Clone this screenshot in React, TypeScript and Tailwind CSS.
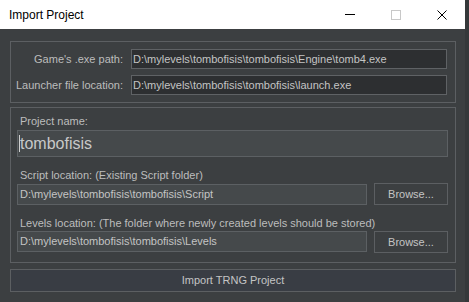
import React from "react";

const font = { fontFamily: '"Liberation Sans", Arial, sans-serif' };

export default function App() {
  return (
    <div className="w-[469px] h-[302px] bg-[#35383a] flex overflow-hidden" style={font}>
      <div className="w-[465px] h-[302px] flex flex-col">
        {/* Title bar */}
        <div className="h-[29px] bg-white flex items-center shrink-0">
          <span className="pl-[9px] text-[12px] text-black flex-1">Import Project</span>
          <div className="flex items-center h-full">
            <div className="w-[46px] h-full flex items-center justify-center">
              <div className="w-[10px] h-px bg-black" />
            </div>
            <div className="w-[46px] h-full flex items-center justify-center">
              <div className="w-[10px] h-[10px] border border-[#c8c8c8]" />
            </div>
            <div className="w-[46px] h-full flex items-center justify-center">
              <svg width="10" height="10" viewBox="0 0 10 10">
                <path d="M0.5 0.5 L9.5 9.5 M9.5 0.5 L0.5 9.5" stroke="#000" strokeWidth="1" />
              </svg>
            </div>
          </div>
        </div>

        {/* Body */}
        <div className="flex-1 bg-[#3c3f41] pl-[10px] pr-[9px] pt-[12px] flex flex-col text-[#bdbdbd] text-[11px]">
          {/* Group 1 */}
          <div className="border border-[#5c5f62] pt-[7px] pb-[7px] pr-[8px] flex flex-col gap-[6px]">
            <div className="flex items-center">
              <div className="w-[112px] text-right whitespace-nowrap">Game's .exe path:</div>
              <div className="ml-[8px] flex-1 h-[20px] bg-[#2d2f31] border border-[#5f6265] flex items-center pl-[1px] whitespace-nowrap overflow-hidden text-[#c4c4c4]">
                D:\mylevels\tombofisis\tombofisis\Engine\tomb4.exe
              </div>
            </div>
            <div className="flex items-center">
              <div className="w-[112px] text-right whitespace-nowrap">Launcher file location:</div>
              <div className="ml-[8px] flex-1 h-[20px] bg-[#2d2f31] border border-[#5f6265] flex items-center pl-[1px] whitespace-nowrap overflow-hidden text-[#c4c4c4]">
                D:\mylevels\tombofisis\tombofisis\launch.exe
              </div>
            </div>
          </div>

          {/* Group 2 */}
          <div className="mt-[4px] border border-[#5c5f62] pl-[6px] pr-[7px] pt-[6px] pb-[9px] flex flex-col">
            <div className="h-[14px] leading-[14px] pl-[3px]">Project name:</div>
            <div className="mt-[2px] h-[27px] bg-[#45494b] border border-[#5c6063] flex items-center pl-[1px] text-[16px] text-[#c8c8c8]">
              <div className="w-px h-[17px] bg-[#d0d0d0]" />
              <span>tombofisis</span>
            </div>
            <div className="mt-[11px] h-[14px] leading-[14px] pl-[3px] whitespace-nowrap">Script location: (Existing Script folder)</div>
            <div className="mt-[1px] flex gap-[7px]">
              <div className="flex-1 mt-[1px] h-[21px] bg-[#45494b] border border-[#5c6063] flex items-center pl-[2px] whitespace-nowrap text-[#c4c4c4]">
                D:\mylevels\tombofisis\tombofisis\Script
              </div>
              <div className="w-[74px] h-[22px] bg-[#3c3f41] border border-[#5c5f62] flex items-center justify-center text-[#c4c4c4]">
                Browse...
              </div>
            </div>
            <div className="mt-[11px] h-[14px] leading-[14px] pl-[3px] whitespace-nowrap">Levels location: (The folder where newly created levels should be stored)</div>
            <div className="mt-[1px] flex gap-[7px]">
              <div className="flex-1 h-[21px] bg-[#45494b] border border-[#5c6063] flex items-center pl-[2px] whitespace-nowrap text-[#c4c4c4]">
                D:\mylevels\tombofisis\tombofisis\Levels
              </div>
              <div className="w-[74px] h-[22px] bg-[#3c3f41] border border-[#5c5f62] flex items-center justify-center text-[#c4c4c4]">
                Browse...
              </div>
            </div>
          </div>

          {/* Import button */}
          <div className="mt-[6px] h-[23px] bg-[#393d44] border border-[#5c5f62] flex items-center justify-center text-[#c4c4c4]">
            Import TRNG Project
          </div>
        </div>
      </div>
    </div>
  );
}
